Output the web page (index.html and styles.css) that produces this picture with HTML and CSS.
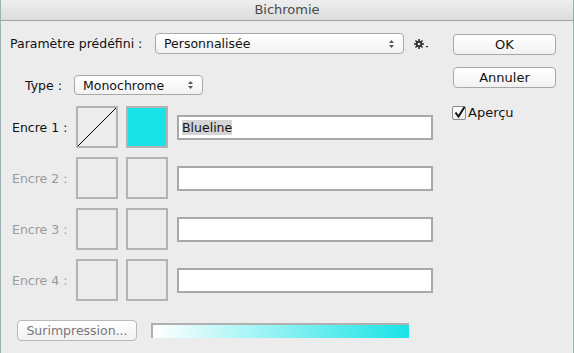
FILE: index.html
```html
<!DOCTYPE html>
<html lang="fr">
<head>
  <meta charset="UTF-8">
  <title>Bichromie</title>
  <link rel="stylesheet" href="styles.css">
</head>
<body>
  <div class="window">
    <div class="titlebar">Bichromie</div>

    <div class="content">
      <!-- left part: settings and inks -->
      <div class="main">
        <div class="preset-row">
          <span class="label">Paramètre prédéfini :</span>
          <div class="select preset">
            <span>Personnalisée</span>
            <svg class="arrows" width="7" height="10" viewBox="0 0 7 10"><path d="M3.5 1 L6 4 H1 Z M3.5 9 L6 6 H1 Z" fill="#555"/></svg>
          </div>
          <svg class="gear" width="16" height="10" viewBox="0 0 16 10">
            <g fill="#333">
              <circle cx="5" cy="5" r="3.2"/>
              <rect x="4.2" y="0" width="1.6" height="10"/>
              <rect x="0" y="4.2" width="10" height="1.6"/>
              <rect x="4.2" y="0" width="1.6" height="10" transform="rotate(45 5 5)"/>
              <rect x="4.2" y="0" width="1.6" height="10" transform="rotate(-45 5 5)"/>
            </g>
            <circle cx="5" cy="5" r="1.3" fill="#ececec"/>
            <path d="M11.5 7 H14.5 L13 8.8 Z" fill="#333"/>
          </svg>
        </div>

        <div class="type-row">
          <span class="label">Type :</span>
          <div class="select type">
            <span>Monochrome</span>
            <svg class="arrows" width="7" height="10" viewBox="0 0 7 10"><path d="M3.5 1 L6 4 H1 Z M3.5 9 L6 6 H1 Z" fill="#555"/></svg>
          </div>
        </div>

        <div class="inks">
          <div class="ink">
            <span class="label">Encre 1 :</span>
            <div class="swatch curve">
              <svg width="38" height="38" viewBox="0 0 38 38"><line x1="0" y1="38" x2="38" y2="0" stroke="#000" stroke-width="1"/></svg>
            </div>
            <div class="swatch cyan"></div>
            <div class="field"><span class="selected">Blueline</span></div>
          </div>
          <div class="ink off">
            <span class="label">Encre 2 :</span>
            <div class="swatch"></div>
            <div class="swatch"></div>
            <div class="field"></div>
          </div>
          <div class="ink off">
            <span class="label">Encre 3 :</span>
            <div class="swatch"></div>
            <div class="swatch"></div>
            <div class="field"></div>
          </div>
          <div class="ink off">
            <span class="label">Encre 4 :</span>
            <div class="swatch"></div>
            <div class="swatch"></div>
            <div class="field"></div>
          </div>
        </div>

        <div class="footer-row">
          <button class="btn disabled">Surimpression...</button>
          <div class="ramp"></div>
        </div>
      </div>

      <!-- right part: dialog buttons -->
      <div class="side">
        <button class="btn">OK</button>
        <button class="btn">Annuler</button>
        <label class="check">
          <span class="box">
            <svg width="13" height="13" viewBox="0 0 13 13"><path d="M2.5 6.5 L5.5 10.5 L11.5 1" fill="none" stroke="#111" stroke-width="2"/></svg>
          </span>
          Aperçu
        </label>
      </div>
    </div>
  </div>
</body>
</html>
```

FILE: styles.css
```css
html, body { margin: 0; padding: 0; }
body { font-family: "DejaVu Sans", "Liberation Sans", sans-serif; font-size: 12.5px; color: #111; background: #ececec; }

.window { width: 574px; height: 353px; box-sizing: border-box; border-left: 1px solid #9fb0b0; border-right: 1px solid #9fb0b0; background: #ececec; }

.titlebar { height: 20px; line-height: 20px; text-align: center; color: #4a4a4a; font-size: 13px; background: linear-gradient(#eeeeee, #dcdcdc); border-bottom: 1px solid #a3a3a3; }

.content { display: flex; padding: 12px 0 0 9px; }
.main { width: 443px; }
.side { display: flex; flex-direction: column; padding-top: 1px; width: 103px; }

.label { white-space: nowrap; }

.select { display: flex; align-items: center; justify-content: space-between; box-sizing: border-box; height: 21px; padding: 0 8px 0 8px; border: 1px solid #a9a9a9; border-radius: 4px; background: linear-gradient(#ffffff, #f2f2f2); }
.arrows { display: block; }

.preset-row { display: flex; align-items: center; height: 21px; }
.preset-row .label { width: 145px; }
.preset { width: 249px; }
.gear { margin-left: 10px; }

.type-row { display: flex; align-items: center; height: 20px; margin-top: 21px; padding-left: 15px; }
.type-row .label { width: 49px; }
.type { width: 129px; height: 20px; }

.inks { display: flex; flex-direction: column; gap: 9px; margin-top: 11px; }
.ink { display: flex; align-items: center; height: 42px; }
.ink .label { box-sizing: border-box; width: 58px; padding-left: 2px; margin-right: 8px; }
.ink.off .label { color: #9a9a9a; }

.swatch { box-sizing: border-box; width: 42px; height: 42px; border: 2px solid #b3b3b3; margin-right: 8px; }
.swatch.cyan { background: #19e3e6; }
.swatch svg { display: block; }

.field { box-sizing: border-box; width: 256px; height: 25px; margin-left: 1px; padding: 2px 3px; border: 2px solid #a8a8a8; background: #fff; line-height: 17px; }
.selected { background: #d4d4d4; }

.footer-row { display: flex; align-items: center; margin-top: 19px; padding-left: 7px; }
.ramp { box-sizing: border-box; width: 258px; height: 15px; margin-left: 14px; border-top: 2px solid #b0b0b0; border-left: 2px solid #b0b0b0; background: linear-gradient(to right, #ffffff, #19e3e6); }

.btn { box-sizing: border-box; height: 21px; padding: 0; border: 1px solid #a8a8a8; border-radius: 4px; background: linear-gradient(#ffffff, #f1f1f1); font-family: inherit; font-size: 13px; color: #111; }
.side .btn { width: 103px; margin-bottom: 12px; }
.btn.disabled { width: 120px; font-size: 12.5px; color: #777; border-color: #b9b9b9; }

.check { display: flex; align-items: center; gap: 2px; margin-top: 5px; margin-left: -1px; font-size: 13px; }
.check .box { box-sizing: border-box; width: 14px; height: 14px; border: 1px solid #8a8a8a; border-radius: 2px; background: linear-gradient(#ffffff, #ededed); }
.check .box svg { display: block; margin: -1px 0 0 0; }
```
